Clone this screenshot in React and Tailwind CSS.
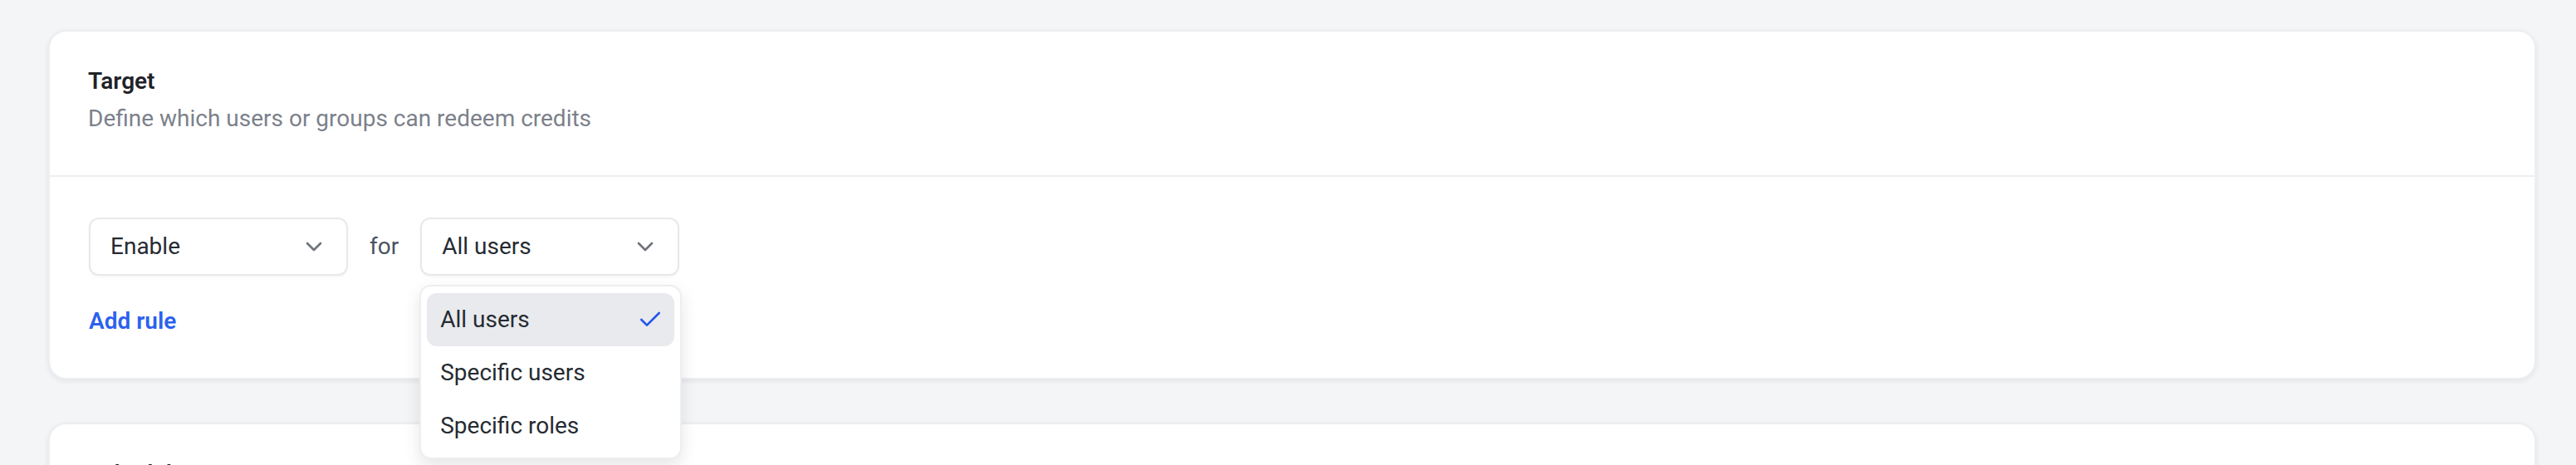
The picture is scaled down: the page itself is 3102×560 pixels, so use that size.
import React, { useState } from "react";
import { Check, ChevronDown } from "lucide-react";

const options = ["All users", "Specific users", "Specific roles"];

const SelectBox = ({ value }) => (
  <div className="flex h-[70px] w-[312px] items-center justify-between rounded-[12px] border-2 border-[#e7e9ec] bg-white pl-6 pr-[23px] shadow-[0_2px_3px_rgba(0,0,0,0.04)]">
    <span className="text-[28px] leading-[40px] text-[#262b32]">{value}</span>
    <ChevronDown size={32} strokeWidth={2} className="text-[#6f747c]" />
  </div>
);

const App = () => {
  const [target, setTarget] = useState("All users");

  return (
    <div className="min-h-screen bg-[#f4f5f7] pl-[58px] pr-[48px] pt-[36px] font-['Roboto',sans-serif]">
      <div className="flex flex-col gap-[52px]">
        {/* Target card */}
        <div className="rounded-[22px] border-2 border-[#eceef1] bg-white shadow-[0_2px_6px_rgba(16,24,40,0.08)]">
          <div className="border-b-2 border-[#eceef0] px-[46px] pt-[40px] pb-[48px]">
            <h2 className="text-[28px] font-semibold leading-[40px] text-[#1f2329]">Target</h2>
            <p className="mt-[5px] text-[28px] leading-[40px] text-[#7c818b]">
              Define which users or groups can redeem credits
            </p>
          </div>

          <div className="px-[47px] pt-[49px] pb-[48px]">
            <div className="flex items-center gap-[26px]">
              <SelectBox value="Enable" />
              <span className="text-[28px] leading-[40px] text-[#4b5360]">for</span>
              <div className="relative">
                <SelectBox value={target} />

                {/* Open menu */}
                <div className="absolute left-[-1px] top-[81px] z-10 w-[316px] rounded-[14px] border-2 border-[#eceef0] bg-white px-[7px] pt-[8px] pb-[6px] shadow-[0_8px_20px_rgba(0,0,0,0.10)]">
                  {options.map((opt) => (
                    <div
                      key={opt}
                      onClick={() => setTarget(opt)}
                      className={`flex h-[64px] cursor-pointer items-center justify-between rounded-[12px] pl-4 pr-[13px] ${
                        opt === target ? "bg-[#e9eaed]" : "bg-white"
                      }`}
                    >
                      <span className="text-[28px] leading-[40px] text-[#262b32]">{opt}</span>
                      {opt === target && (
                        <Check size={32} strokeWidth={2} className="text-[#2557ea]" />
                      )}
                    </div>
                  ))}
                </div>
              </div>
            </div>

            <button className="mt-[35px] block text-[28px] font-semibold leading-[40px] text-[#2b61ee]">
              Add rule
            </button>
          </div>
        </div>

        {/* Next card (cut off) */}
        <div className="rounded-[22px] border-2 border-[#eceef1] bg-white shadow-[0_2px_6px_rgba(16,24,40,0.08)]">
          <div className="px-[46px] pt-[40px] pb-[48px]">
            <h2 className="text-[28px] font-semibold leading-[40px] text-[#1f2329]">Schedule</h2>
            <p className="mt-[5px] text-[28px] leading-[40px] text-[#7c818b]">
              Define when credits can be redeemed
            </p>
          </div>
        </div>
      </div>
    </div>
  );
};

export default App;
